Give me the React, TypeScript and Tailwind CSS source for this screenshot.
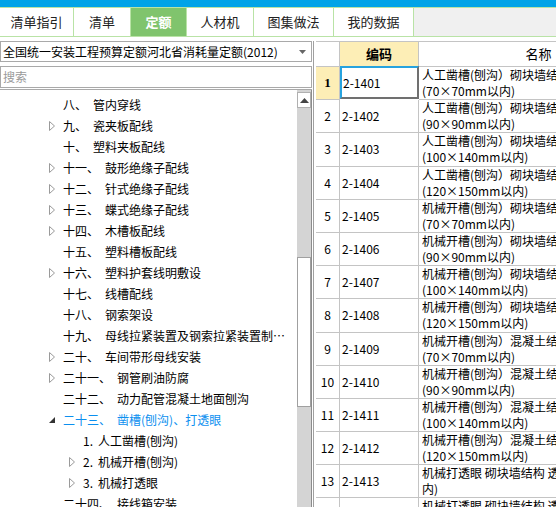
import type { ReactNode } from "react";

type TreeItem = {
  level: number;
  arrow: "none" | "closed" | "open";
  num: string;
  name: string;
  active?: boolean;
};

const tabs = [
  { label: "清单指引", w: "w-[74px]" },
  { label: "清单", w: "w-[57px]" },
  { label: "定额", w: "w-[56px]", active: true },
  { label: "人材机", w: "w-[67px]" },
  { label: "图集做法", w: "w-[80px]" },
  { label: "我的数据", w: "w-[80px]" },
];

const tree: TreeItem[] = [
  { level: 0, arrow: "none", num: "八、", name: "管内穿线" },
  { level: 0, arrow: "closed", num: "九、", name: "瓷夹板配线" },
  { level: 0, arrow: "none", num: "十、", name: "塑料夹板配线" },
  { level: 0, arrow: "closed", num: "十一、", name: "鼓形绝缘子配线" },
  { level: 0, arrow: "closed", num: "十二、", name: "针式绝缘子配线" },
  { level: 0, arrow: "closed", num: "十三、", name: "蝶式绝缘子配线" },
  { level: 0, arrow: "closed", num: "十四、", name: "木槽板配线" },
  { level: 0, arrow: "none", num: "十五、", name: "塑料槽板配线" },
  { level: 0, arrow: "closed", num: "十六、", name: "塑料护套线明敷设" },
  { level: 0, arrow: "none", num: "十七、", name: "线槽配线" },
  { level: 0, arrow: "none", num: "十八、", name: "钢索架设" },
  { level: 0, arrow: "none", num: "十九、", name: "母线拉紧装置及钢索拉紧装置制…" },
  { level: 0, arrow: "closed", num: "二十、", name: "车间带形母线安装" },
  { level: 0, arrow: "closed", num: "二十一、", name: "钢管刷油防腐" },
  { level: 0, arrow: "none", num: "二十二、", name: "动力配管混凝土地面刨沟" },
  { level: 0, arrow: "open", num: "二十三、", name: "凿槽(刨沟)、打透眼", active: true },
  { level: 1, arrow: "none", num: "1.", name: "人工凿槽(刨沟)" },
  { level: 1, arrow: "closed", num: "2.", name: "机械开槽(刨沟)" },
  { level: 1, arrow: "closed", num: "3.", name: "机械打透眼" },
  { level: 0, arrow: "none", num: "二十四、", name: "接线箱安装" },
];

const rows = [
  ["2-1401", "人工凿槽(刨沟）砌块墙结构", "(70×70mm以内)"],
  ["2-1402", "人工凿槽(刨沟）砌块墙结构", "(90×90mm以内)"],
  ["2-1403", "人工凿槽(刨沟）砌块墙结构", "(100×140mm以内)"],
  ["2-1404", "人工凿槽(刨沟）砌块墙结构", "(120×150mm以内)"],
  ["2-1405", "机械开槽(刨沟）砌块墙结构", "(70×70mm以内)"],
  ["2-1406", "机械开槽(刨沟）砌块墙结构", "(90×90mm以内)"],
  ["2-1407", "机械开槽(刨沟）砌块墙结构", "(100×140mm以内)"],
  ["2-1408", "机械开槽(刨沟）砌块墙结构", "(120×150mm以内)"],
  ["2-1409", "机械开槽(刨沟）混凝土结构", "(70×70mm以内)"],
  ["2-1410", "机械开槽(刨沟）混凝土结构", "(90×90mm以内)"],
  ["2-1411", "机械开槽(刨沟）混凝土结构", "(100×140mm以内)"],
  ["2-1412", "机械开槽(刨沟）混凝土结构", "(120×150mm以内)"],
  ["2-1413", "机械打透眼 砌块墙结构 透眼直径(mm以", "内)"],
  ["2-1414", "机械打透眼 砌块墙结构 透眼直径(mm以", "内)"],
];

const Arrow = ({ kind }: { kind: TreeItem["arrow"] }) => {
  if (kind === "closed") {
    return (
      <svg width="6" height="10" viewBox="0 0 6 10" className="block">
        <polygon points="0.5,0.5 5.5,5 0.5,9.5" fill="white" stroke="#9a9a9a" strokeWidth="1" />
      </svg>
    );
  }
  if (kind === "open") {
    return (
      <svg width="6" height="6" viewBox="0 0 6 6" className="block">
        <polygon points="6,0 6,6 0,6" fill="#333333" />
      </svg>
    );
  }
  return null;
};

const Cell = ({ className, children }: { className: string; children?: ReactNode }) => (
  <div className={`shrink-0 border-r border-b border-[#c4c4c4] ${className}`}>{children}</div>
);

export default function App() {
  return (
    <div className="w-[556px] h-[507px] overflow-hidden bg-white flex flex-col text-[12px] text-black font-['Noto_Sans_CJK_SC',sans-serif]">
      <div className="h-[7px] shrink-0 bg-[#00a3e8]" />
      <div className="h-[30px] shrink-0 flex bg-[#f0f0f0] border-y border-[#b9e3a6]">
        {tabs.map((t) => (
          <div
            key={t.label}
            className={`${t.w} h-full flex items-center justify-center border-r border-[#b9e3a6] text-[13px] ${
              t.active ? "bg-[#80c46d] text-white font-bold" : "bg-white text-[#222]"
            }`}
          >
            {t.label}
          </div>
        ))}
      </div>

      <div className="flex flex-1 min-h-0 pt-[4px]">
        {/* left panel */}
        <div className="w-[312px] shrink-0 flex flex-col">
          <div className="h-[21px] shrink-0 flex items-center border border-[#a9a9a9] pl-[2px] pr-[5px] bg-white">
            <span className="flex-1 whitespace-nowrap overflow-hidden">全国统一安装工程预算定额河北省消耗量定额(2012)</span>
            <svg width="7" height="4" viewBox="0 0 7 4">
              <polygon points="0,0 7,0 3.5,4" fill="#666" />
            </svg>
          </div>
          <div className="h-[22px] shrink-0 mt-[4px] flex items-center border border-[#a9a9a9] pl-[2px] text-[#9a9a9a]">
            搜索
          </div>
          <div className="flex flex-1 min-h-0 mt-[1px] border-t border-[#a9a9a9]">
            <div className="flex-1 min-w-0 pt-[4px]">
              {tree.map((item) => (
                <div
                  key={item.num + item.name}
                  className={`h-[21px] flex items-center whitespace-nowrap ${
                    item.level === 1 ? "pl-[69px]" : "pl-[49px]"
                  } ${item.active ? "text-[#0b8fef]" : ""}`}
                >
                  <div className="w-[14px] h-full flex items-center">
                    <Arrow kind={item.arrow} />
                  </div>
                  <span>{item.num}</span>
                  <span className={item.level === 1 ? "ml-[5px]" : "ml-[6px]"}>{item.name}</span>
                </div>
              ))}
            </div>
            {/* scrollbar */}
            <div className="w-[15px] shrink-0 flex flex-col bg-[#d4d4d4] border-r border-[#8c8c8c]">
              <div className="h-[16px] mt-[2px] bg-white border border-[#b0b0b0] flex items-center justify-center">
                <svg width="9" height="5" viewBox="0 0 9 5">
                  <polygon points="0,5 9,5 4.5,0" fill="#444" />
                </svg>
              </div>
              <div className="h-[149px] shrink-0" />
              <div className="h-[150px] shrink-0 bg-white border border-[#a0a0a0]" />
            </div>
          </div>
        </div>

        {/* right panel */}
        <div className="flex-1 min-w-0 overflow-hidden border-l border-[#a0a0a0] ml-[1px] pl-[2px]">
          <div className="w-[360px]">
            <div className="flex h-[26px] border-t border-[#c4c4c4] font-bold">
              <Cell className="w-[24px] h-full" />
              <Cell className="w-[79px] h-full bg-[#fdeeb6] flex items-center justify-center text-[13px]">编码</Cell>
              <Cell className="w-[240px] h-full flex items-center justify-center text-[13px] font-normal">名称</Cell>
            </div>
            {rows.map((r, i) => (
              <div key={r[0]} className="flex h-[33.2px]">
                <Cell
                  className={`w-[24px] h-full flex items-center justify-center ${
                    i === 0 ? "bg-[#fdeeb6] font-bold font-['Liberation_Serif',serif] text-[13px]" : ""
                  }`}
                >
                  {i + 1}
                </Cell>
                {i === 0 ? (
                  <div className="w-[79px] shrink-0 h-full flex items-center pl-[1px] border-2 border-t-[#27a3df] border-l-[#27a3df] border-r-[#707070] border-b-[#707070] -mt-[1px]">
                    {r[0]}
                  </div>
                ) : (
                  <Cell className="w-[79px] h-full flex items-center pl-[2px]">{r[0]}</Cell>
                )}
                <Cell className="w-[240px] h-full pl-[3px] pt-[0px] leading-[16px] whitespace-nowrap overflow-hidden">
                  <div>{r[1]}</div>
                  <div>{r[2]}</div>
                </Cell>
              </div>
            ))}
          </div>
        </div>
      </div>
    </div>
  );
}
